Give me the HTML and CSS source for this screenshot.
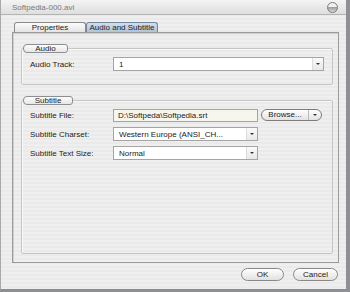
FILE: index.html
```html
<!DOCTYPE html>
<html lang="en">

<head>
    <meta charset="UTF-8">
    <title>Softpedia-000.avi</title>
    <link rel="stylesheet" href="styles.css">
</head>

<body>
    <div class="window">
        <div class="titlebar">
            <span class="title">Softpedia-000.avi</span>
            <span class="close-btn"></span>
        </div>

        <div class="content">
            <div class="tabs">
                <div class="tab">Properties</div>
                <div class="tab active">Audio and Subtitle</div>
            </div>

            <div class="panel">
                <fieldset class="group audio">
                    <legend><span>Audio</span></legend>
                    <div class="row">
                        <label>Audio Track:</label>
                        <div class="select wide">
                            <span class="value">1</span>
                            <span class="arrow"></span>
                        </div>
                    </div>
                </fieldset>

                <fieldset class="group subtitle">
                    <legend><span>Subtitle</span></legend>
                    <div class="row">
                        <label>Subtitle File:</label>
                        <div class="textbox">D:\Softpeda\Softpedia.srt</div>
                        <div class="browse">
                            <span class="browse-text">Browse...</span>
                            <span class="browse-arrow"></span>
                        </div>
                    </div>
                    <div class="row">
                        <label>Subtitle Charset:</label>
                        <div class="select">
                            <span class="value">Western Europe (ANSI_CH...</span>
                            <span class="arrow"></span>
                        </div>
                    </div>
                    <div class="row">
                        <label>Subtitle Text Size:</label>
                        <div class="select">
                            <span class="value">Normal</span>
                            <span class="arrow"></span>
                        </div>
                    </div>
                </fieldset>
            </div>

            <div class="footer">
                <button class="pill ok" type="button">OK</button>
                <button class="pill cancel" type="button">Cancel</button>
            </div>
        </div>
    </div>
</body>

</html>
```

FILE: styles.css
```css
body {
    margin: 0;
    background: #8e9096;
    font-family: 'Liberation Sans', Arial, sans-serif;
    font-size: 8px;
    color: #222;
}

.window {
    width: 346px;
    height: 290px;
    box-sizing: border-box;
    border-left: 1px solid #a9a9a9;
    border-bottom: 1px solid #8c8c8c;
    background: repeating-linear-gradient(#efefef 0 2px, #eaeaea 2px 4px);
    display: flex;
    flex-direction: column;
}

.titlebar {
    height: 14px;
    border-bottom: 1px solid #b4b4b4;
    background: linear-gradient(#f4f4f4, #dedede);
    display: flex;
    align-items: center;
    justify-content: space-between;
    padding: 0 8px 0 11px;
}

.title {
    color: #7a7a7a;
    font-size: 8px;
}

.close-btn {
    width: 9px;
    height: 9px;
    border-radius: 50%;
    border: 1px solid #7c7c7c;
    background: linear-gradient(#f0f0f0 0 40%, #9a9a9a 45%, #d8d8d8);
}

.content {
    flex: 1;
    padding: 7px 7px 0 11px;
    display: flex;
    flex-direction: column;
}

.tabs {
    display: flex;
    margin-left: 2px;
    height: 10px;
}

.tab {
    width: 72px;
    box-sizing: border-box;
    border: 1px solid #8a8a8a;
    border-bottom: none;
    border-radius: 3px 3px 0 0;
    background: linear-gradient(#fbfbfb, #e4e4e4);
    text-align: center;
    line-height: 10px;
}

.tab.active {
    border-color: #71869e;
    background: linear-gradient(#d3dfeb, #b0c3d6);
}

.panel {
    height: 231px;
    box-sizing: border-box;
    border: 1px solid #9a9a9a;
    box-shadow: inset 1px 1px 0 #d0d0d0;
    padding: 0 5px 8px 8px;
    display: flex;
    flex-direction: column;
}

.group {
    margin: 0;
    padding: 0 8px;
    border: 1px solid #c6c6c6;
    border-radius: 2px;
    box-shadow: inset 1px 1px 0 #f8f8f8;
    min-inline-size: 0;
}

.group legend {
    margin-left: -7px;
    padding: 0;
    box-sizing: border-box;
    height: 9px;
    border: 1px solid #8e8e8e;
    border-radius: 4px 3px 3px 4px;
    background: linear-gradient(#fdfdfd, #e6e6e6);
}

.group legend span {
    display: block;
    text-align: center;
    line-height: 7px;
}

.audio {
    margin-top: 11px;
    padding-top: 4px;
    padding-bottom: 8px;
}

.audio legend {
    width: 45px;
}

.subtitle {
    margin-top: 11px;
    flex: 1;
    padding-top: 3px;
}

.subtitle legend {
    width: 50px;
}

.row {
    display: flex;
    align-items: center;
    height: 14px;
    margin-bottom: 5px;
}

.row label {
    width: 83px;
    flex-shrink: 0;
}

.select {
    width: 145px;
    height: 14px;
    box-sizing: border-box;
    border: 1px solid #a4a4a4;
    background: #fff;
    display: flex;
    align-items: center;
}

.select.wide {
    flex: 1;
}

.select .value {
    flex: 1;
    padding-left: 5px;
    white-space: nowrap;
    overflow: hidden;
}

.select .arrow {
    width: 10px;
    height: 12px;
    border-left: 1px solid #dcdcdc;
    background: linear-gradient(#fafafa, #e8e8e8);
    display: flex;
    align-items: center;
    justify-content: center;
}

.select .arrow::after,
.browse-arrow::after {
    content: "";
    border-left: 2px solid transparent;
    border-right: 2px solid transparent;
    border-top: 2px solid #333;
}

.textbox {
    width: 145px;
    height: 13px;
    box-sizing: border-box;
    border: 1px solid #a4a4a4;
    background: #f6f6ee;
    padding-left: 4px;
    line-height: 11px;
}

.browse {
    margin-left: 3px;
    width: 61px;
    height: 12px;
    box-sizing: border-box;
    border: 1px solid #7c7c7c;
    border-radius: 6px;
    background: linear-gradient(#ffffff, #e2e2e2);
    display: flex;
    align-items: center;
}

.browse-text {
    width: 46px;
    text-align: center;
    border-right: 1px solid #b8b8b8;
    line-height: 10px;
}

.browse-arrow {
    flex: 1;
    display: flex;
    justify-content: center;
}

.footer {
    display: flex;
    justify-content: flex-end;
    gap: 9px;
    padding-top: 5px;
    padding-right: 1px;
}

.pill {
    height: 13px;
    padding: 0;
    border: 1px solid #888;
    border-radius: 7px;
    background: linear-gradient(#ffffff, #e0e0e0);
    font-family: 'Liberation Sans', Arial, sans-serif;
    font-size: 8px;
    color: #222;
    line-height: 11px;
}

.ok {
    width: 43px;
}

.cancel {
    width: 45px;
}
```
